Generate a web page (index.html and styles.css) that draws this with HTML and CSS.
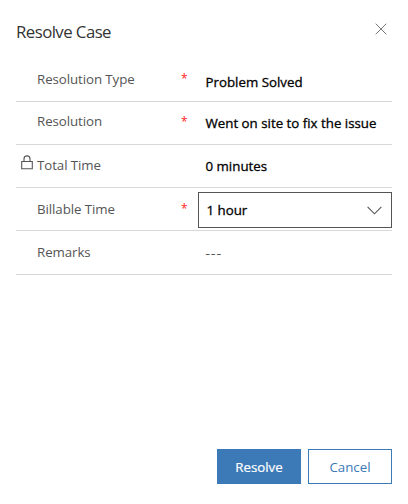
FILE: index.html
```html
<!DOCTYPE html>
<html lang="en">
<head>
<meta charset="utf-8">
<title>Resolve Case</title>
<link rel="stylesheet" href="styles.css">
</head>
<body>
<main class="dialog">
  <header class="header">
    <h1 class="title">Resolve Case</h1>
    <svg class="close" width="12" height="12" viewBox="0 0 12 12"><path d="M.7 .7l10.6 10.6M11.3 .7L.7 11.3"/></svg>
  </header>
  <section class="fields">
    <div class="row first">
      <span class="icon"></span><span class="label">Resolution Type</span><span class="required">*</span>
      <span class="value">Problem Solved</span>
    </div>
    <div class="row second">
      <span class="icon"></span><span class="label">Resolution</span><span class="required">*</span>
      <span class="value">Went on site to fix the issue</span>
    </div>
    <div class="row">
      <span class="icon"><svg width="12" height="15" viewBox="0 0 12 15"><path d="M.7 6.5h10.6v7.2H.7zM3 6.5V3.9a3 3 0 0 1 6 0v2.6"/></svg></span><span class="label">Total Time</span><span class="required"></span>
      <span class="value">0 minutes</span>
    </div>
    <div class="row lower">
      <span class="icon"></span><span class="label">Billable Time</span><span class="required">*</span>
      <span class="select"><span>1 hour</span><svg width="15" height="9" viewBox="0 0 15 9"><path d="M.6 .8l6.9 7 6.9-7"/></svg></span>
    </div>
    <div class="row lower last">
      <span class="icon"></span><span class="label">Remarks</span><span class="required"></span>
      <span class="value empty">---</span>
    </div>
  </section>
  <footer class="footer">
    <button class="button primary">Resolve</button>
    <button class="button">Cancel</button>
  </footer>
</main>
</body>
</html>
```
FILE: styles.css
```css
* { box-sizing: border-box; }
body {
  margin: 0;
  background: #fff;
  font-family: "Open Sans", "Noto Sans", sans-serif;
  font-size: 13.3px;
  color: #555;
}
svg { display: block; fill: none; stroke: #555; stroke-width: 1.1; }
.dialog {
  display: flex;
  flex-direction: column;
  height: 504px;
  padding: 0 16px 20px;
}
.header {
  display: flex;
  justify-content: space-between;
  height: 58px;
  padding-top: 20px;
}
.title {
  margin: 0;
  font-size: 16.8px;
  line-height: 24px;
  font-weight: 400;
  letter-spacing: -.55px;
  color: #333;
}
.header .close { margin: 3px 5px 0 0; stroke: #777; stroke-width: 1; }
.row {
  display: grid;
  grid-template-columns: 21px 144px 17px 1fr;
  height: 43px;
  border-bottom: 1px solid #d8d8d8;
  line-height: 20px;
}
.first { height: 44px; }
.icon { padding: 10px 0 0 5px; }
.label { padding-top: 10px; letter-spacing: -.08px; }
.first .label, .lower .label { padding-top: 11px; }
.second .label { padding-top: 9px; }
.required { padding-top: 11px; color: #f22; font-size: 12px; }
.second .required { padding-top: 10px; }
.value {
  padding: 11px 0 0 7.5px;
  color: #000;
  font-size: 13.3px;
  -webkit-text-stroke: .3px #000;
}
.first .value { padding-top: 14px; }
.value.empty { padding-top: 12px; letter-spacing: 1.3px; color: #555; -webkit-text-stroke: .2px #555; }
.last { height: 44px; }
.select {
  display: flex;
  align-items: center;
  justify-content: space-between;
  height: 36px;
  margin-top: 4px;
  padding: 0 9px 0 7.5px;
  border: 1px solid #555;
  color: #000;
  font-size: 13.3px;
  -webkit-text-stroke: .3px #000;
}
.footer {
  display: flex;
  justify-content: flex-end;
  gap: 7px;
  margin-top: auto;
}
.button {
  width: 84px;
  height: 35px;
  padding: 0;
  border: 1px solid #3b79b7;
  background: #fff;
  color: #3b79b7;
  font: 13.3px "Open Sans", "Noto Sans", sans-serif;
}
.primary { background: #3b79b7; color: #fff; -webkit-text-stroke: .2px #fff; }
```
